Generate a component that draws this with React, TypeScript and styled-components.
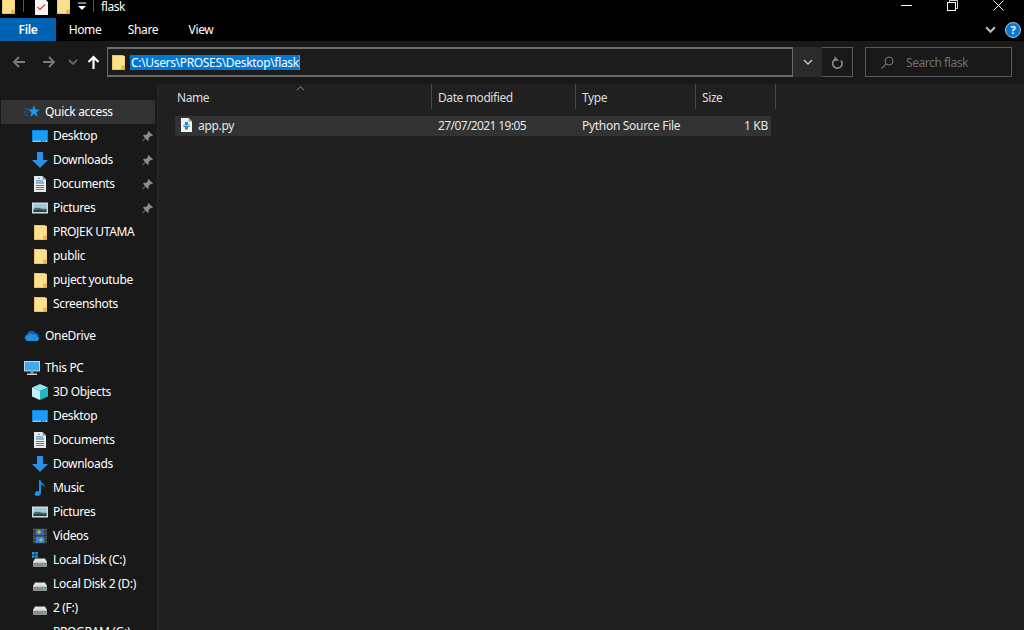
import React, { FC } from 'react'
import styled, { createGlobalStyle } from 'styled-components'

const GlobalStyle = createGlobalStyle`
  html, body {
    margin: 0;
    height: 100%;
    background: #000;
    overflow: hidden;
  }
  #root {
    height: 100%;
  }
`

const Window = styled.div`
  display: flex;
  flex-direction: column;
  width: 1024px;
  height: 630px;
  overflow: hidden;
  font-family: 'Noto Sans', 'Open Sans', sans-serif;
  font-size: 12px;
  color: #fff;
  background: #191919;
`

const TitleBar = styled.div`
  display: flex;
  flex: none;
  align-items: flex-start;
  height: 18px;
  background: #000;
  overflow: hidden;
`

const QuickIcons = styled.div`
  display: flex;
  align-items: flex-start;
  padding-left: 2px;
`

const TitleDivider = styled.span<{ $left: number; $right: number }>`
  width: 1px;
  height: 12px;
  margin: 0 ${p => p.$right}px 0 ${p => p.$left}px;
  background: #555;
`

const Spacer = styled.span<{ $width: number }>`
  width: ${p => p.$width}px;
`

const TitleText = styled.span`
  line-height: 13px;
  letter-spacing: -0.4px;
`

const WindowControls = styled.div`
  display: flex;
  margin-left: auto;
  padding-right: 20px;
  gap: 35px;
`

const TabBar = styled.div`
  display: flex;
  flex: none;
  align-items: stretch;
  height: 23px;
  background: #000;
`

const Tab = styled.div<{ $active?: boolean; $width: number }>`
  display: flex;
  align-items: center;
  justify-content: center;
  width: ${p => p.$width}px;
  background: ${p => (p.$active ? '#0063b1' : 'transparent')};
  font-weight: ${p => (p.$active ? 600 : 400)};
  letter-spacing: -0.35px;
`

const TabSide = styled.div`
  display: flex;
  align-items: center;
  gap: 9px;
  margin-left: auto;
  padding-right: 3px;
`

const NavBar = styled.div`
  display: flex;
  flex: none;
  align-items: center;
  height: 43px;
  box-sizing: border-box;
  padding: 0 12px 1px;
  background: #191919;
`

const NavButton = styled.span<{ $gap: number }>`
  display: flex;
  margin-right: ${p => p.$gap}px;
`

const AddressBox = styled.div`
  display: flex;
  align-items: center;
  box-sizing: border-box;
  width: 686px;
  height: 30px;
  padding-left: 4px;
  border: 1px solid #6a6a6a;
  border-width: 2px 1px;
  background: #1c1c1c;
  gap: 5px;
`

const SelectedPath = styled.span`
  display: block;
  height: 15px;
  line-height: 15px;
  padding: 0 0 0 1px;
  background: #0078d7;
  border-right: 1px solid #e9661c;
  letter-spacing: -0.33px;
  white-space: nowrap;
`

const DropButton = styled.div`
  display: flex;
  align-items: center;
  justify-content: center;
  width: 29px;
  height: 30px;
  background: #2b2b2b;
`

const RefreshButton = styled.div`
  display: flex;
  align-items: center;
  justify-content: center;
  box-sizing: border-box;
  width: 31px;
  height: 30px;
  border: 1px solid #5a5a5a;
  border-left: 0;
`

const SearchBox = styled.div`
  display: flex;
  align-items: center;
  box-sizing: border-box;
  width: 147px;
  height: 30px;
  margin-left: 12px;
  padding-left: 15px;
  border: 1px solid #5a5a5a;
  color: #6f6f6f;
  gap: 12px;
  letter-spacing: -0.43px;
`

const Body = styled.div`
  display: flex;
  flex: 1;
  min-height: 0;
`

const Sidebar = styled.nav`
  flex: none;
  box-sizing: border-box;
  width: 158px;
  padding-top: 16px;
  border-right: 1px solid #262626;
  background: #191919;
  overflow: hidden;
`

const TreeRow = styled.div<{ $selected?: boolean; $child?: boolean; $gapAbove?: boolean }>`
  display: flex;
  align-items: center;
  height: 24px;
  margin: ${p => (p.$gapAbove ? '8px' : '0')} 2px 0 1px;
  padding-left: ${p => (p.$child ? 31 : 23)}px;
  background: ${p => (p.$selected ? '#333' : 'transparent')};
  gap: 5px;
`

const TreeLabel = styled.span`
  flex: 1;
  padding-bottom: 2px;
  white-space: nowrap;
  letter-spacing: -0.33px;
`

const PinSlot = styled.span`
  display: flex;
  margin-right: 2px;
`

const IconSlot = styled.span`
  display: flex;
  flex: none;
  justify-content: center;
  width: 16px;
`

const Content = styled.main`
  flex: 1;
  box-sizing: border-box;
  padding-left: 17px;
  background: #202020;
`

const columns = '257px 144px 120px 80px'

const HeaderRow = styled.div`
  position: relative;
  display: grid;
  grid-template-columns: ${columns};
  width: 601px;
  height: 25px;
  margin-bottom: 7px;
`

const SortMark = styled.span`
  position: absolute;
  top: 0;
  left: 121px;
  display: flex;
`

const HeaderCell = styled.div`
  display: flex;
  align-items: center;
  padding: 1px 0 0 2px;
  border-right: 1px solid #4a4a4a;
  color: #dedede;
  letter-spacing: -0.4px;

  & + & {
    padding-left: 6px;
  }
`

const FileRow = styled.div`
  display: grid;
  grid-template-columns: ${columns};
  width: 596px;
  height: 20px;
  background: #333;
`

const FileCell = styled.div<{ $right?: boolean; $tight?: boolean }>`
  display: flex;
  align-items: center;
  justify-content: ${p => (p.$right ? 'flex-end' : 'flex-start')};
  padding: 0 0 2px 6px;
  margin-right: ${p => (p.$right ? 8 : 0)}px;
  color: #e6e6e6;
  letter-spacing: ${p => (p.$tight ? -0.6 : -0.3)}px;
  white-space: nowrap;
  gap: 6px;
`

const FolderIcon: FC<{ cut?: boolean }> = ({ cut }) => (
  <svg width="13" height={cut ? 14 : 15} viewBox={cut ? '1 2 12 13' : '1 1 12 14'}>
    <path d="M1 1h9l3 1v13H1z" fill="#fde08a" />
    <path d="M1 1h9v1H1zM1 1h.7v14H1z" fill="#eec15a" />
    <path d="M9.5 15v-4H13v4z" fill="#e8b53c" />
    <path d="M1 14.4h9v.6H1z" fill="#e8b53c" />
  </svg>
)

const NoteIcon = () => (
  <svg width="13" height="15" viewBox="0 2 13 15">
    <path d="M0 0h9l4 4v13H0z" fill="#f4f4f4" />
    <path d="M2.5 9l2.5 2.5L10 6.5" fill="none" stroke="#e0562a" strokeWidth="1.3" />
  </svg>
)

const Chevron: FC<{ size?: number; color?: string; width?: number; up?: boolean }> = ({ size = 10, color = '#bdbdbd', width = 1.3, up }) => (
  <svg width={size} height={size} viewBox="0 0 10 10">
    <path d={up ? 'M1 7l4-4 4 4' : 'M1 3l4 4 4-4'} fill="none" stroke={color} strokeWidth={width} />
  </svg>
)

const ArrowIcon: FC<{ dir: 'left' | 'right' | 'up'; color: string }> = ({ dir, color }) => {
  const paths = {
    left: 'M13 7H2M7 2L2 7l5 5',
    right: 'M0 7h11M6 2l5 5-5 5',
    up: 'M6.5 14V2M1.5 7l5-5 5 5',
  }
  return (
    <svg width="13" height="14" viewBox="0 0 13 14">
      <path d={paths[dir]} fill="none" stroke={color} strokeWidth={dir === 'up' ? 2.2 : 1.8} />
    </svg>
  )
}

const StarIcon = () => (
  <svg width="16" height="16" viewBox="0 0 16 16">
    <path d="M10 1l1.5 4.4 4.5.1-3.600 2.800 1.300 4.500-3.700-2.700-3.800 2.600 1.400-4.400-3.600-2.900 4.600 0z" fill="#1a9bf0" />
    <path d="M1 5h3M0 8h3M1 11h3" stroke="#0f6fb5" strokeWidth="1" />
  </svg>
)

const DesktopIcon = () => (
  <svg width="16" height="16" viewBox="0 0 16 16">
    <rect x="0" y="2" width="16" height="12" fill="#0d84e0" />
    <rect x="1" y="3" width="14" height="9.6" fill="#1a9cf5" />
    <path d="M1 13.2h8M11 13.2h1M13 13.2h2" stroke="#fff" strokeWidth=".8" />
  </svg>
)

const DownloadIcon = () => (
  <svg width="16" height="16" viewBox="0 0 16 16">
    <path d="M5 0h6v8h5l-8 8-8-8h5z" fill="#2b8fe6" />
  </svg>
)

const DocumentIcon = () => (
  <svg width="12" height="16" viewBox="0 0 12 16">
    <path d="M0 0h8.5L12 3.5V16H0z" fill="#e8e8e8" />
    <path d="M8.5 0v3.5H12z" fill="#9a9a9a" />
    <path d="M4 3l1-1.5L6 3z" fill="#1a86d8" />
    <path d="M2 5h7M2 7h8" stroke="#1a86d8" strokeWidth="1" />
    <path d="M2 9.5h8M2 11.5h8M2 13.5h8" stroke="#777" strokeWidth="1" />
  </svg>
)

const PictureIcon = () => (
  <svg width="16" height="16" viewBox="0 0 16 16">
    <rect x="0" y="2.5" width="16" height="11" fill="#d8d8d8" />
    <rect x="1.5" y="4" width="13" height="8" fill="#9cc7dc" />
    <path d="M1.5 9c3-2 5-1 8-.5s4 0 5 .2V12h-13z" fill="#3f6f6b" />
    <path d="M1.5 10.5c4-.8 8-.3 13 0V12h-13z" fill="#1f3f46" />
  </svg>
)

const PinIcon = () => (
  <svg width="11" height="11" viewBox="0 0 11 11">
    <path d="M6.5 0L11 4.5 9.8 5.2 8.8 4.8 6.6 7l.2 2-1 1-2.4-2.4L.7 10.4 0 10.2 3 7 1 4.7l1-1 2 .2 2.1-2.2-.4-1z" fill="#8c8c8c" />
  </svg>
)

const CloudIcon = () => (
  <svg width="16" height="16" viewBox="0 0 16 16">
    <path d="M3.5 12.5a3 3 0 0 1-.6-5.900A4.700 4.700 0 0 1 11.500 5a3.800 3.800 0 0 1 3.500 3l-6 4.500z" fill="#0a5fb0" />
    <path d="M3.500 13A2.800 2.800 0 0 1 3 7.600a3.400 3.400 0 0 1 5.500-1 3 3 0 0 1 4.500 1.600A2.500 2.500 0 0 1 13.500 13z" fill="#1c8fe3" />
  </svg>
)

const MonitorIcon = () => (
  <svg width="16" height="16" viewBox="0 0 16 16">
    <rect x="0" y="1" width="16" height="10.5" fill="#c9d4dc" />
    <rect x="1" y="2" width="14" height="8.5" fill="#3fa9ee" />
    <path d="M6.500 11.500h3v2h-3z" fill="#8a97a0" />
    <path d="M3 13.500h10V15H3z" fill="#c9d4dc" />
  </svg>
)

const CubeIcon = () => (
  <svg width="16" height="16" viewBox="0 0 16 16">
    <path d="M8 0l8 3.500L8 7 0 3.500z" fill="#8fe6ee" />
    <path d="M0 3.500L8 7v9l-8-3.500z" fill="#c6f3f5" />
    <path d="M16 3.500L8 7v9l8-3.500z" fill="#25b5cb" />
  </svg>
)

const MusicIcon = () => (
  <svg width="12" height="16" viewBox="0 0 12 16">
    <path d="M5 0h1.400c.3 3 4.600 3.600 4.600 7.500-.8-1.800-2.500-2.700-4-3V13c0 1.800-1.600 3-3.500 3C1.800 16 .7 15 .7 13.700c0-1.600 1.500-2.700 3-2.700.5 0 1 .1 1.300.3z" fill="#1a90e8" />
  </svg>
)

const VideoIcon = () => (
  <svg width="14" height="16" viewBox="0 0 14 16">
    <rect x="0" y="0" width="14" height="16" fill="#2a2a2a" />
    <path d="M1 1v14M13 1v14" stroke="#888" strokeWidth="1.200" strokeDasharray="1.200 1.200" />
    <rect x="2.500" y="1" width="9" height="6.500" fill="#2f6fb0" />
    <rect x="2.500" y="8.500" width="9" height="6.500" fill="#2f86d8" />
    <circle cx="6" cy="4" r="1.800" fill="#d9a93c" />
    <circle cx="8" cy="12" r="1.800" fill="#d9a93c" />
  </svg>
)

const DriveIcon: FC<{ windows?: boolean }> = ({ windows }) => (
  <svg width="16" height="16" viewBox="0 0 16 16">
    <path d="M3 6.500h10l2 3.500H1z" fill="#e0e0e0" />
    <rect x="1" y="10" width="14" height="5" fill="#8e8e8e" />
    <rect x="1" y="10" width="14" height="1" fill="#c4c4c4" />
    <rect x="11" y="12" width="2" height="1.500" fill="#35d24c" />
    {windows && <path d="M0 0h2.500v2.500H0zM3.300 0h2.500v2.500H3.300zM0 3.300h2.500v2.500H0zM3.300 3.300h2.500v2.500H3.300z" fill="#16a4f2" />}
  </svg>
)

const PythonFileIcon = () => (
  <svg width="11" height="14" viewBox="0 0 11 14">
    <path d="M0 0h7.500L11 3.500V14H0z" fill="#f2f2f2" />
    <path d="M7.500 0v3.500H11z" fill="#a0a0a0" />
    <path d="M4 4h3v2.500h1.500v2.500H7v2.500H4V9H2.500V6.500H4z" fill="#2e8ab8" />
    <path d="M2.500 7.500h6" stroke="#f2f2f2" strokeWidth=".6" />
  </svg>
)

const SearchIcon = () => (
  <svg width="13" height="13" viewBox="0 0 13 13">
    <circle cx="8" cy="5" r="4" fill="none" stroke="#7a7a7a" strokeWidth="1" />
    <path d="M5 8l-4.500 4.500" stroke="#4f7a6a" strokeWidth="1.200" />
  </svg>
)

const RefreshIcon = () => (
  <svg width="12" height="13" viewBox="0 0 12 13">
    <path d="M4.500 3.200A4.700 4.700 0 1 0 10 4.500" fill="none" stroke="#8a8a8a" strokeWidth="1.700" />
    <path d="M3.500 0v4.800h4.500z" fill="#8a8a8a" />
  </svg>
)

const MinimizeIcon = () => (
  <svg width="11" height="10" viewBox="0 0 11 10">
    <path d="M0 5.500h11" stroke="#fff" strokeWidth="1" />
  </svg>
)

const RestoreIcon = () => (
  <svg width="11" height="11" viewBox="0 0 11 11">
    <path d="M2.500 2.500V.5h8v8h-2" fill="none" stroke="#ddd" strokeWidth="1" />
    <rect x=".5" y="2.500" width="8" height="8" fill="none" stroke="#fff" strokeWidth="1" />
  </svg>
)

const CloseIcon = () => (
  <svg width="11" height="11" viewBox="0 0 11 11">
    <path d="M.5.500l10 10M10.500.500l-10 10" stroke="#fff" strokeWidth="1" />
  </svg>
)

const QuickDropIcon = () => (
  <svg width="8" height="12" viewBox="0 0 8 12">
    <path d="M0 3h8" stroke="#fff" strokeWidth="1" />
    <path d="M0 6h8l-4 4z" fill="#fff" />
  </svg>
)

const HelpIcon = () => (
  <svg width="16" height="16" viewBox="0 0 16 16">
    <circle cx="8" cy="8" r="7.500" fill="#0a78d7" stroke="#cfe6f8" strokeWidth=".8" />
    <text x="8" y="12" textAnchor="middle" fontSize="11" fontWeight="700" fill="#fff" fontFamily="Noto Sans, sans-serif">
      ?
    </text>
  </svg>
)

type TreeItem = {
  label: string
  icon: React.ReactNode
  child?: boolean
  pinned?: boolean
  selected?: boolean
  gapAbove?: boolean
}

const tree: TreeItem[] = [
  { label: 'Quick access', icon: <StarIcon />, selected: true },
  { label: 'Desktop', icon: <DesktopIcon />, child: true, pinned: true },
  { label: 'Downloads', icon: <DownloadIcon />, child: true, pinned: true },
  { label: 'Documents', icon: <DocumentIcon />, child: true, pinned: true },
  { label: 'Pictures', icon: <PictureIcon />, child: true, pinned: true },
  { label: 'PROJEK UTAMA', icon: <FolderIcon />, child: true },
  { label: 'public', icon: <FolderIcon />, child: true },
  { label: 'puject youtube', icon: <FolderIcon />, child: true },
  { label: 'Screenshots', icon: <FolderIcon />, child: true },
  { label: 'OneDrive', icon: <CloudIcon />, gapAbove: true },
  { label: 'This PC', icon: <MonitorIcon />, gapAbove: true },
  { label: '3D Objects', icon: <CubeIcon />, child: true },
  { label: 'Desktop', icon: <DesktopIcon />, child: true },
  { label: 'Documents', icon: <DocumentIcon />, child: true },
  { label: 'Downloads', icon: <DownloadIcon />, child: true },
  { label: 'Music', icon: <MusicIcon />, child: true },
  { label: 'Pictures', icon: <PictureIcon />, child: true },
  { label: 'Videos', icon: <VideoIcon />, child: true },
  { label: 'Local Disk (C:)', icon: <DriveIcon windows />, child: true },
  { label: 'Local Disk 2 (D:)', icon: <DriveIcon />, child: true },
  { label: '2 (F:)', icon: <DriveIcon />, child: true },
  { label: 'PROGRAM (G:)', icon: <DriveIcon />, child: true },
]

const App: FC = () => {
  return (
    <Window>
      <GlobalStyle />
      <TitleBar>
        <QuickIcons>
          <FolderIcon cut />
          <TitleDivider $left={8} $right={11} />
          <NoteIcon />
          <Spacer $width={9} />
          <FolderIcon cut />
          <Spacer $width={8} />
          <QuickDropIcon />
          <TitleDivider $left={7} $right={7} />
        </QuickIcons>
        <TitleText>flask</TitleText>
        <WindowControls>
          <MinimizeIcon />
          <RestoreIcon />
          <CloseIcon />
        </WindowControls>
      </TitleBar>
      <TabBar>
        <Tab $active $width={56}>
          File
        </Tab>
        <Tab $width={58}>Home</Tab>
        <Tab $width={58}>Share</Tab>
        <Tab $width={58}>View</Tab>
        <TabSide>
          <Chevron size={11} color="#bbb" width={2} />
          <HelpIcon />
        </TabSide>
      </TabBar>
      <NavBar>
        <NavButton $gap={18}>
          <ArrowIcon dir="left" color="#7c7c7c" />
        </NavButton>
        <NavButton $gap={12}>
          <ArrowIcon dir="right" color="#7c7c7c" />
        </NavButton>
        <NavButton $gap={9}>
          <Chevron size={10} color="#666" width={1.8} />
        </NavButton>
        <NavButton $gap={7}>
          <ArrowIcon dir="up" color="#fff" />
        </NavButton>
        <AddressBox>
          <FolderIcon />
          <SelectedPath>C:\Users\PROSES\Desktop\flask</SelectedPath>
        </AddressBox>
        <DropButton>
          <Chevron size={10} color="#ccc" />
        </DropButton>
        <RefreshButton>
          <RefreshIcon />
        </RefreshButton>
        <SearchBox>
          <SearchIcon />
          Search flask
        </SearchBox>
      </NavBar>
      <Body>
        <Sidebar>
          {tree.map((item, i) => (
            <TreeRow key={i} $child={item.child} $selected={item.selected} $gapAbove={item.gapAbove}>
              <IconSlot>{item.icon}</IconSlot>
              <TreeLabel>{item.label}</TreeLabel>
              {item.pinned && (
                <PinSlot>
                  <PinIcon />
                </PinSlot>
              )}
            </TreeRow>
          ))}
        </Sidebar>
        <Content>
          <HeaderRow>
            <SortMark>
              <Chevron size={9} color="#999" width={1} up />
            </SortMark>
            <HeaderCell>Name</HeaderCell>
            <HeaderCell>Date modified</HeaderCell>
            <HeaderCell>Type</HeaderCell>
            <HeaderCell>Size</HeaderCell>
          </HeaderRow>
          <FileRow>
            <FileCell>
              <PythonFileIcon />
              app.py
            </FileCell>
            <FileCell $tight>27/07/2021 19:05</FileCell>
            <FileCell>Python Source File</FileCell>
            <FileCell $right>1 KB</FileCell>
          </FileRow>
        </Content>
      </Body>
    </Window>
  )
}

export default App
